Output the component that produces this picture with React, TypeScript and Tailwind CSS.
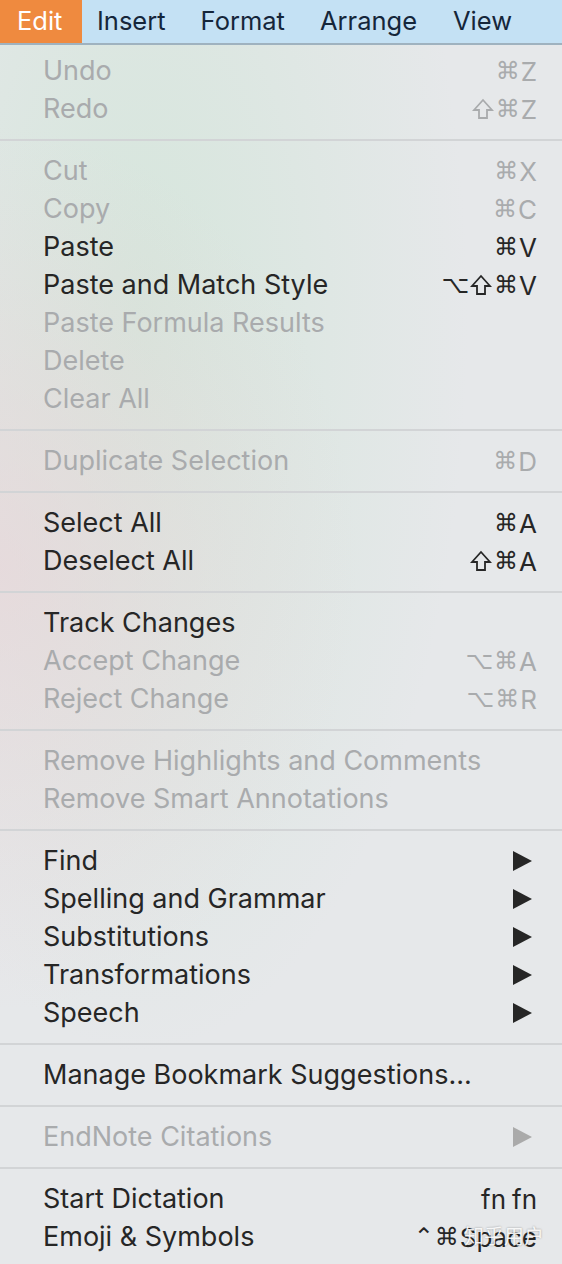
import React from 'react';

type Item = { label: string; key?: string; enabled?: boolean; submenu?: boolean };

const groups: Item[][] = [
  [
    { label: 'Undo', key: '⌘Z' },
    { label: 'Redo', key: '⇧⌘Z' },
  ],
  [
    { label: 'Cut', key: '⌘X' },
    { label: 'Copy', key: '⌘C' },
    { label: 'Paste', key: '⌘V', enabled: true },
    { label: 'Paste and Match Style', key: '⌥⇧⌘V', enabled: true },
    { label: 'Paste Formula Results' },
    { label: 'Delete' },
    { label: 'Clear All' },
  ],
  [{ label: 'Duplicate Selection', key: '⌘D' }],
  [
    { label: 'Select All', key: '⌘A', enabled: true },
    { label: 'Deselect All', key: '⇧⌘A', enabled: true },
  ],
  [
    { label: 'Track Changes', enabled: true },
    { label: 'Accept Change', key: '⌥⌘A' },
    { label: 'Reject Change', key: '⌥⌘R' },
  ],
  [{ label: 'Remove Highlights and Comments' }, { label: 'Remove Smart Annotations' }],
  [
    { label: 'Find', enabled: true, submenu: true },
    { label: 'Spelling and Grammar', enabled: true, submenu: true },
    { label: 'Substitutions', enabled: true, submenu: true },
    { label: 'Transformations', enabled: true, submenu: true },
    { label: 'Speech', enabled: true, submenu: true },
  ],
  [{ label: 'Manage Bookmark Suggestions...', enabled: true }],
  [{ label: 'EndNote Citations', submenu: true }],
  [
    { label: 'Start Dictation', key: 'fn fn', enabled: true },
    { label: 'Emoji & Symbols', key: '⌃⌘Space', enabled: true },
  ],
];

const Arrow = ({ enabled }: { enabled?: boolean }) => (
  <svg width="19" height="20" viewBox="0 0 19 20" className="mr-[5px]">
    <polygon points="0,0 19,10 0,20" fill={enabled ? '#262626' : '#aaaaaa'} />
  </svg>
);

// outlined shift arrow, the font glyph is too thin
const Shift = () => (
  <svg width="22" height="22" viewBox="0 0 22 22" className="mr-[2px]">
    <polygon
      points="11,2 20,12 15,12 15,20 7,20 7,12 2,12"
      fill="none"
      stroke="currentColor"
      strokeWidth="1.8"
      strokeLinejoin="miter"
    />
  </svg>
);

const Keys = ({ keys }: { keys: string }) => (
  <span className="flex items-center font-['Inter','DejaVu_Sans',sans-serif] text-[26px]">
    {Array.from(keys).map((ch, i) =>
      ch === '⇧' ? (
        <Shift key={i} />
      ) : ch === '⌘' || ch === '⌥' || ch === '⌃' ? (
        <span key={i} className="font-['DejaVu_Sans',sans-serif] text-[24px] mr-[1px]">
          {ch}
        </span>
      ) : ch === ' ' ? (
        <span key={i} className="w-[6px]" />
      ) : (
        <span key={i}>{ch}</span>
      )
    )}
  </span>
);

const Row = ({ item }: { item: Item }) => (
  <div
    className={`h-[38px] flex items-center justify-between pl-[43px] pr-[25px] ${
      item.enabled ? 'text-[#262626]' : 'text-[#a9abad]'
    }`}
  >
    <span>{item.label}</span>
    {item.key && <Keys keys={item.key} />}
    {item.submenu && <Arrow enabled={item.enabled} />}
  </div>
);

export default function App() {
  return (
    <div className="relative w-[562px] h-[1264px] overflow-hidden font-['Inter',sans-serif] text-[27px] bg-[#e6e8ea]">
      <div className="absolute inset-0 bg-[radial-gradient(ellipse_at_25%_25%,rgba(200,228,208,0.55),transparent_55%)]" />
      <div className="absolute inset-0 bg-[radial-gradient(ellipse_at_0%_45%,rgba(236,208,214,0.55),transparent_45%)]" />

      <div className="relative">
        {/* menu bar */}
        <div className="h-[45px] flex items-stretch bg-[#c4e1f4] border-b-2 border-[#9fb2bf] text-[#15263a] text-[25.5px]">
          <div className="w-[82px] bg-[#ef8a3f] text-white flex items-center pl-[17px]">Edit</div>
          <div className="flex items-center pl-[15px]">Insert</div>
          <div className="flex items-center pl-[35px]">Format</div>
          <div className="flex items-center pl-[35px]">Arrange</div>
          <div className="flex items-center pl-[36px]">View</div>
        </div>

        <div className="pt-[7px]">
          {groups.map((g, i) => (
            <div key={i}>
              {i > 0 && <div className="my-[11px] h-[2px] bg-[#d2d4d6]" />}
              {g.map((item) => (
                <Row key={item.label} item={item} />
              ))}
            </div>
          ))}
        </div>
      </div>

      <div className="absolute right-[18px] bottom-[13px] text-[20px] text-white/90 font-['Noto_Sans_CJK_SC',sans-serif] [text-shadow:0_0_2px_rgba(0,0,0,0.4)]">
        知乎用户
      </div>
    </div>
  );
}
